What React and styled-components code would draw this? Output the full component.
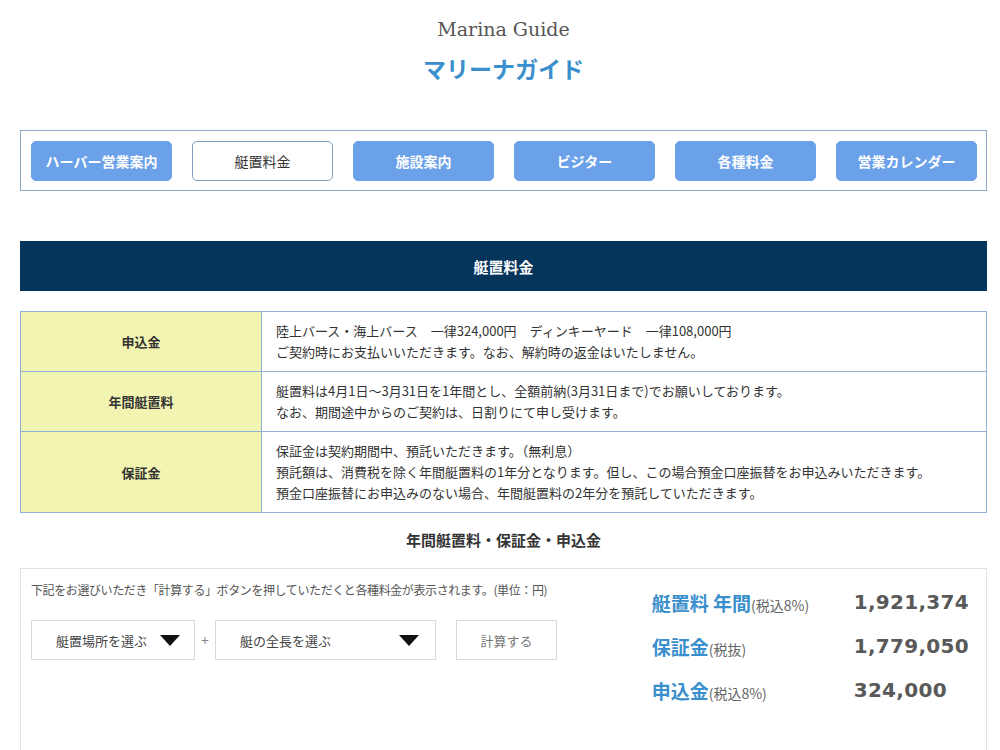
import React from 'react';
import styled, { createGlobalStyle } from 'styled-components';

const GlobalStyle = createGlobalStyle`
  html, body {
    margin: 0;
    padding: 0;
    background: #fff;
    font-family: "Noto Sans CJK JP", "Noto Sans", sans-serif;
    color: #333;
  }
`;

const Page = styled.div`
  width: 967px;
  margin-left: 20px;
  padding-top: 14px;
`;

const Header = styled.header`
  text-align: center;
`;

const SubTitle = styled.div`
  font-family: "DejaVu Serif", "Liberation Serif", serif;
  font-size: 19px;
  color: #555;
  line-height: 30px;
`;

const Title = styled.h1`
  margin: 2px 0 0;
  font-size: 23px;
  font-weight: 700;
  color: #3a8fcc;
  line-height: 44px;
`;

const Nav = styled.nav`
  margin-top: 40px;
  border: 1px solid #8fa9c9;
  padding: 10px 9px 9px 10px;
  display: flex;
  gap: 20px;
`;

const NavButton = styled.a`
  width: 141px;
  height: 40px;
  box-sizing: border-box;
  border-radius: 5px;
  display: flex;
  align-items: center;
  justify-content: center;
  font-size: 14px;
  font-weight: ${p => (p.$active ? 400 : 700)};
  background: ${p => (p.$active ? '#fff' : '#6aa1e9')};
  color: ${p => (p.$active ? '#333' : '#fff')};
  border: 1px solid ${p => (p.$active ? '#7f9fc0' : '#6aa1e9')};
  text-decoration: none;
`;

const Banner = styled.h2`
  margin: 50px 0 0;
  height: 50px;
  background: #05355b;
  color: #fff;
  font-size: 15px;
  font-weight: 700;
  display: flex;
  align-items: center;
  justify-content: center;
`;

const Table = styled.table`
  margin-top: 20px;
  width: 100%;
  border-collapse: collapse;
  font-size: 13px;
  line-height: 21px;
`;

const Th = styled.th`
  width: 240px;
  background: #f2f5b1;
  border: 1px solid #8fb1d8;
  font-weight: 700;
  color: #333;
  text-align: center;
  padding: 0;
`;

const Td = styled.td`
  border: 1px solid #8fb1d8;
  padding: 8px 14px 9px;
  color: #333;
  height: ${p => p.$h}px;
  box-sizing: border-box;
`;

const SectionTitle = styled.h3`
  margin: 13px 0 0;
  text-align: center;
  font-size: 15px;
  font-weight: 700;
  line-height: 28px;
  color: #333;
`;

const CalcBox = styled.div`
  margin-top: 14px;
  border: 1px solid #e2e2e2;
  border-bottom: none;
  height: 190px;
  padding: 10px 17px 0 10px;
  display: flex;
  align-items: flex-start;
  justify-content: space-between;
`;

const CalcLeft = styled.div`
  display: flex;
  flex-direction: column;
`;

const Note = styled.p`
  margin: 0;
  font-size: 12px;
  color: #555;
  line-height: 22px;
  letter-spacing: -0.4px;
`;

const Controls = styled.div`
  margin-top: 19px;
  display: flex;
  align-items: center;
`;

const Select = styled.div`
  width: ${p => p.$w}px;
  height: 40px;
  box-sizing: border-box;
  border: 1px solid #d9d9d9;
  display: flex;
  align-items: center;
  justify-content: space-between;
  padding: 0 ${p => p.$pr}px 0 ${p => p.$pl}px;
  font-size: 13px;
  color: #444;
`;

const Arrow = styled.span`
  width: 0;
  height: 0;
  border-left: 10px solid transparent;
  border-right: 10px solid transparent;
  border-top: 11px solid #111;
`;

const Plus = styled.span`
  width: 20px;
  text-align: center;
  font-size: 14px;
  color: #888;
`;

const CalcButton = styled.button`
  margin-left: 20px;
  width: 101px;
  height: 40px;
  border: 1px solid #d9d9d9;
  background: #fff;
  font-family: inherit;
  font-size: 13px;
  color: #777;
`;

const Results = styled.div`
  padding-top: 1px;
  display: grid;
  grid-template-columns: 202px auto;
  grid-auto-rows: 44px;
  align-items: center;
`;

const Label = styled.div`
  font-size: 19px;
  font-weight: 700;
  color: #3a8fcc;
  white-space: nowrap;
`;

const Small = styled.span`
  font-size: 14px;
  font-weight: 400;
  color: #666;
`;

const Value = styled.div`
  font-family: "DejaVu Sans", "Noto Sans", sans-serif;
  font-size: 20px;
  font-weight: 700;
  color: #595959;
  letter-spacing: 0.3px;
`;

const navItems = ['ハーバー営業案内', '艇置料金', '施設案内', 'ビジター', '各種料金', '営業カレンダー'];

const rows = [
  {
    head: '申込金',
    h: 60,
    lines: [
      '陸上バース・海上バース　一律324,000円　ディンキーヤード　一律108,000円',
      'ご契約時にお支払いいただきます。なお、解約時の返金はいたしません。',
    ],
  },
  {
    head: '年間艇置料',
    h: 60,
    lines: [
      '艇置料は4月1日～3月31日を1年間とし、全額前納(3月31日まで)でお願いしております。',
      'なお、期間途中からのご契約は、日割りにて申し受けます。',
    ],
  },
  {
    head: '保証金',
    h: 81,
    lines: [
      '保証金は契約期間中、預託いただきます。（無利息）',
      '預託額は、消費税を除く年間艇置料の1年分となります。但し、この場合預金口座振替をお申込みいただきます。',
      '預金口座振替にお申込みのない場合、年間艇置料の2年分を預託していただきます。',
    ],
  },
];

const results = [
  { label: '艇置料 年間', note: '(税込8%)', value: '1,921,374' },
  { label: '保証金', note: '(税抜)', value: '1,779,050' },
  { label: '申込金', note: '(税込8%)', value: '324,000' },
];

export default function App() {
  return (
    <>
      <GlobalStyle />
      <Page>
        <Header>
          <SubTitle>Marina Guide</SubTitle>
          <Title>マリーナガイド</Title>
        </Header>

        <Nav>
          {navItems.map((item) => (
            <NavButton key={item} $active={item === '艇置料金'}>
              {item}
            </NavButton>
          ))}
        </Nav>

        <Banner>艇置料金</Banner>

        <Table>
          <tbody>
            {rows.map((row) => (
              <tr key={row.head}>
                <Th>{row.head}</Th>
                <Td $h={row.h}>
                  {row.lines.map((line, i) => (
                    <div key={i}>{line}</div>
                  ))}
                </Td>
              </tr>
            ))}
          </tbody>
        </Table>

        <SectionTitle>年間艇置料・保証金・申込金</SectionTitle>

        <CalcBox>
          <CalcLeft>
            <Note>下記をお選びいただき「計算する」ボタンを押していただくと各種料金が表示されます。(単位：円)</Note>
            <Controls>
              <Select $w={164} $pl={24} $pr={14}>
                艇置場所を選ぶ
                <Arrow />
              </Select>
              <Plus>+</Plus>
              <Select $w={221} $pl={24} $pr={16}>
                艇の全長を選ぶ
                <Arrow />
              </Select>
              <CalcButton>計算する</CalcButton>
            </Controls>
          </CalcLeft>

          <Results>
            {results.map((r) => (
              <React.Fragment key={r.label}>
                <Label>
                  {r.label}
                  <Small>{r.note}</Small>
                </Label>
                <Value>{r.value}</Value>
              </React.Fragment>
            ))}
          </Results>
        </CalcBox>
      </Page>
    </>
  );
}
